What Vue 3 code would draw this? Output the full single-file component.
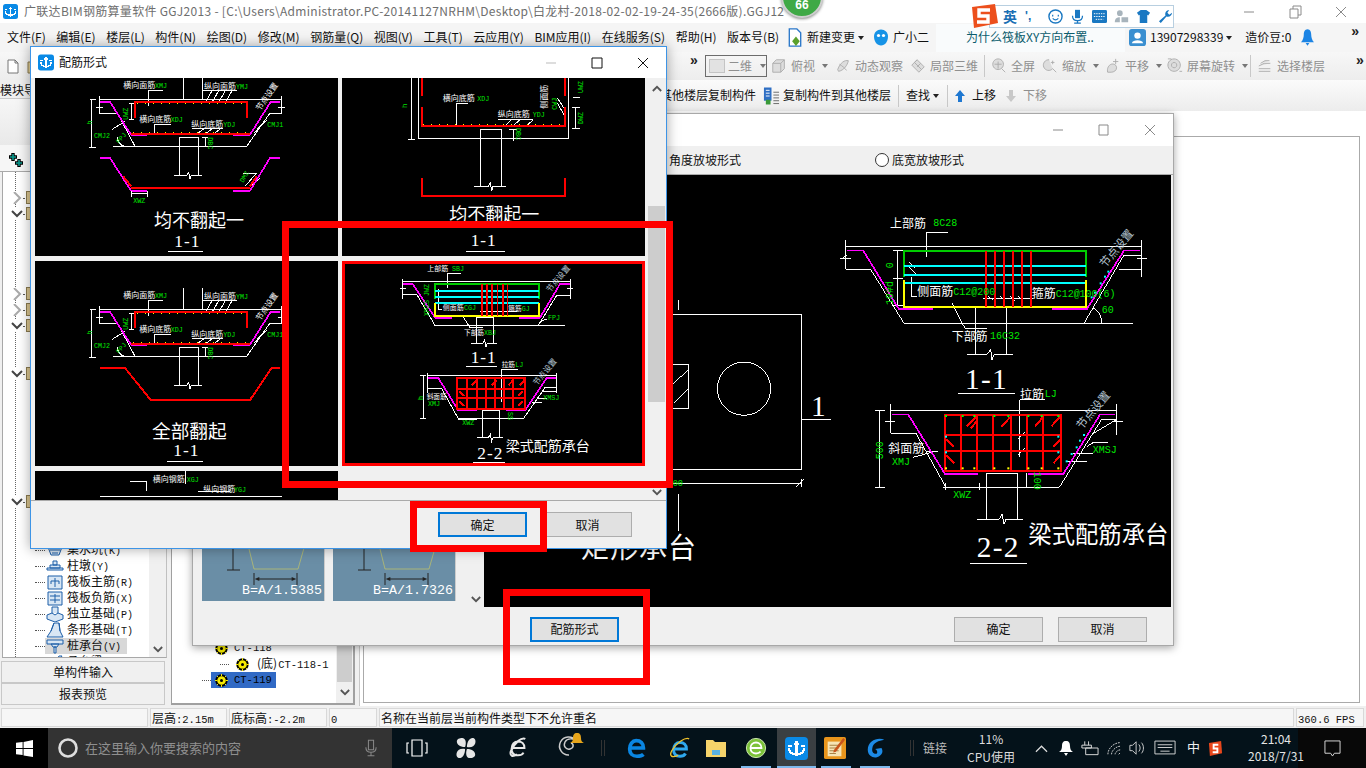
<script setup>
const menus = ["文件(F)", "编辑(E)", "楼层(L)", "构件(N)", "绘图(D)", "修改(M)", "钢筋量(Q)", "视图(V)", "工具(T)", "云应用(Y)", "BIM应用(I)", "在线服务(S)", "帮助(H)", "版本号(B)"];

// toolbar under the menu, greyed out: width is the space each button takes
const viewTools = [
  { text: "俯视", w: 64, caret: true, d: "M2 6l4-4h9v10l-4 4H2zM2 6h9v10M11 6l4-4" },
  { text: "动态观察", w: 75, d: "M3 13c3-8 8-11 12-10-1 5-5 11-11 12zM5 7c3 2 6 4 8 7" },
  { text: "局部三维", w: 74, d: "M2 8l6-6 8 8-6 6zM5 5l8 8M8 2l-3 3M12 6l-4 4" },
  { sep: true },
  { text: "全屏", w: 51, d: "M8 1a6 6 0 1 0 .01 0zM8 4v8M4 7h8M12 12l4 4" },
  { text: "缩放", w: 63, caret: true, d: "M8 2a6 6 0 1 0 4 10M12 12l4 4M12 3v4M10 5h4" },
  { text: "平移", w: 62, caret: true, d: "M3 16c-1-4 1-8 4-9 3-1 6 1 6 4s-3 5-6 5zM12 1v6M9 4h6" },
  { text: "屏幕旋转", w: 83, caret: true, d: "M8 1a7 7 0 1 0 .01 0zM8 5a3 3 0 1 0 .01 0zM1 1h4M14 15h3" },
  { sep: true },
  { text: "选择楼层", w: 70, d: "M2 9l6-3h7M2 12h13M2 15h13M4 6l5-3h5" },
];

const navCaret = { 1: "closed", 2: "open", 7: "closed", 8: "closed", 9: "open", 12: "open", 20: "open" };

const navItems = {
  23: { cn: "集水坑", code: "(K)", d: "M2 5h14l-3 8H5zM4 8h10M6 11h6" },
  24: { cn: "柱墩", code: "(Y)", d: "M7 3h4v4H7zM4 7h10v3H4zM1 10h16v2H1z" },
  25: { cn: "筏板主筋", code: "(R)", d: "M2 2h14v13H2zM9 4v9M5 7h8M5 7v3M13 7v3" },
  26: { cn: "筏板负筋", code: "(X)", d: "M2 2h14v13H2zM9 4v9M4 6h10M4 10h10" },
  27: { cn: "独立基础", code: "(P)", d: "M6 1h6v6l5 2v4l-8 3-8-3V9l5-2zM6 7l3 2 3-2" },
  28: { cn: "条形基础", code: "(T)", d: "M8 1h5l1 8 3 6H1l4-6zM8 1L5 9M13 1l1 8" },
  29: { cn: "桩承台", code: "(V)", on: true, d: "M1 2h16v4H1zM5 6h8l-2 3H7zM8 9h2v6H8z" },
  30: { cn: "承台梁", code: "(F)", d: "M4 15L13 2h3L7 15z" },
};

const navRows = Array.from({ length: 31 }, (_, i) => ({
  id: i,
  caret: navCaret[i],
  item: navItems[i],
}));

const slopeCards = [
  { label: "B=A/1.5385" },
  { label: "B=A/1.7326" },
];

const gridX = [382, 412, 438, 465, 492, 518];
const barX = [425, 440, 456, 472, 488, 502];
const bigBarX = [468, 495, 522, 549, 576, 603];
const bigGridX = [303, 352, 400, 452, 500, 550];
const topDots = [258, 308, 343, 403, 445, 505, 545, 595];
const sideDots = [170, 217];
const slopeDots = [[835, 215], [825, 230], [812, 250], [795, 278], [785, 292]];
const xmsDots = [[672, 165], [660, 182], [650, 202], [635, 222], [620, 244]];
// running-app strips along the bottom of the taskbar
const runningApps = [
  { left: 349, w: 30 },
  { left: 385, w: 39 },
  { left: 429, w: 30 },
  { left: 468, w: 30 },
];
</script>

<template>
  <div class="screen">
    <svg class="cad defs" aria-hidden="true">
      <defs>
        <g id="app-logo">
          <rect width="24" height="24" rx="4" fill="#0a8ae6" />
          <path d="M12 4v16M4 11c0 5 3 7 8 7s8-2 8-7M3 9h4M17 9h4M9 7h6" fill="none" stroke="#fff" stroke-width="2.2" />
        </g>
        <g id="gear-mark">
          <circle cx="8" cy="8" r="6.6" fill="#000" />
          <circle cx="8" cy="8" r="4.6" fill="#f5ea00" />
          <path d="M8 1v14M1 8h14M3 3l10 10M13 3L3 13" stroke="#f5ea00" stroke-width="1.5" stroke-dasharray="2 2" />
          <circle cx="8" cy="8" r="1.6" fill="#000" />
        </g>
        <!-- upper section shared by the two left cells -->
        <g id="pile-top">
          <path class="ln" d="M210 65H755M460 0V65M518 0V65M180 65H197M183 65V207M178 207H197M207 55V105M198 88H220M207 105H262L315 205M250 205H650L720 105H755M755 55V105M745 88H765M448 178H505M448 178V293M505 178V293M433 293H470L476 283L480 302L484 293H515M355 38H400M355 38V85M520 38H620M525 75L545 40M545 75L565 40M565 75L585 40M585 75L605 40M373 140H422M373 140V172M485 152H580M505 165L522 152M530 165L547 152M555 165L572 152M305 75V125M298 75H312M298 125H312M245 155L285 130M285 205A30 30 0 0 1 262 178M525 178V207M515 178H535M672 165L705 130M680 155L712 125" />
          <path class="mg" d="M210 72H240L303 170H350M610 170H660L722 72H750" />
          <path class="rd" d="M315 120V72H650V120M303 168H660" />
          <path class="yd" d="M320 76H648M308 163H655" />
          <text class="cn tw" x="280" y="30" font-size="24">横向面筋</text>
          <text class="en tg" x="375" y="30" font-size="20">XMJ</text>
          <text class="cn tw" x="522" y="34" font-size="24">纵向面筋</text>
          <text class="en tg" x="618" y="34" font-size="20">YMJ</text>
          <text class="cn tw" x="328" y="133" font-size="24">横向底筋</text>
          <text class="en tg" x="422" y="133" font-size="20">XDJ</text>
          <text class="cn tw" x="484" y="148" font-size="24">纵向底筋</text>
          <text class="en tg" x="580" y="148" font-size="20">YDJ</text>
          <text class="cn tw" transform="rotate(-55 690 100)" x="690" y="100" font-size="24">节点设置</text>
          <text class="en tg" transform="rotate(-90 294 125)" x="294" y="125" font-size="20">UWZ</text>
          <text class="en tg" transform="rotate(-90 186 140)" x="186" y="140" font-size="22">h</text>
          <text class="en tg" x="192" y="180" font-size="20">CMJ2</text>
          <text class="en tg" x="712" y="148" font-size="20">CMJ1</text>
          <text class="en tg" transform="rotate(-50 267 198)" x="267" y="198" font-size="20">PPJ</text>
          <text class="en tg" transform="rotate(90 534 178)" x="534" y="178" font-size="20">DBC</text>
        </g>
      </defs>
    </svg>

    <header class="titlebar">
      <svg class="title-logo" viewBox="0 0 24 24"><use href="#app-logo" /></svg>
      <span class="title-text">广联达BIM钢筋算量软件 GGJ2013 - [C:\Users\Administrator.PC-20141127NRHM\Desktop\白龙村-2018-02-02-19-24-35(2666版).GGJ12</span>
      <div class="caption">
        <svg class="cap-btn" viewBox="0 0 46 22"><path d="M18 11h10" /></svg>
        <svg class="cap-btn" viewBox="0 0 46 22"><path d="M18 8h8v9h-8zM21 8V5h8v9h-3" /></svg>
        <svg class="cap-btn" viewBox="0 0 46 22"><path d="M18 6l10 10M28 6L18 16" /></svg>
      </div>
    </header>

    <nav class="menubar">
      <div class="menu-items">
        <span v-for="m in menus" :key="m">{{ m }}</span>
      </div>
      <svg class="menu-ico" viewBox="0 0 16 20">
        <path d="M2 1h8l4 4v14H2z" fill="#fff" stroke="#2a77c9" stroke-width="1.4" />
        <path d="M9 9l4 5-4 5-4-5z" fill="#5aa02c" />
      </svg>
      <span class="menu-text">新建变更</span>
      <i class="caret dark menu-caret"></i>
      <svg class="menu-ico bot" viewBox="0 0 16 18">
        <path d="M8 1c4 0 7 3 7 7 0 5-3 9-7 9s-7-4-7-9c0-4 3-7 7-7z" fill="#1793e6" />
        <circle cx="5.5" cy="7" r="1.6" fill="#fff" /><circle cx="10.5" cy="7" r="1.6" fill="#fff" />
      </svg>
      <span class="menu-text">广小二</span>
      <div class="news"><span>为什么筏板XY方向布置..</span></div>
      <svg class="menu-ico user" viewBox="0 0 18 18">
        <rect width="18" height="18" rx="3" fill="#3a8fd0" />
        <circle cx="9" cy="7" r="3.4" fill="#fff" /><path d="M3 15c1-4 11-4 12 0z" fill="#fff" />
      </svg>
      <span class="menu-text">13907298339</span>
      <i class="caret dark user-caret"></i>
      <span class="menu-text">造价豆:0</span>
      <svg class="menu-ico bell" viewBox="0 0 14 20">
        <path d="M7 1c3 0 4 3 4 6s1 6 3 8H0c2-2 3-5 3-8s1-6 4-6zM5 16h4l-2 3z" fill="#1c84e4" />
      </svg>
      <span class="more menu-more">»</span>
    </nav>

    <div class="toolrow">
      <svg class="file-ico" viewBox="0 0 12 15"><path d="M1 1h7l3 3v10H1zM8 1v3h3" fill="#fff" stroke="#777" /></svg>
      <svg class="file-ico open-ico" viewBox="0 0 12 15"><path d="M1 3h4l1 2h5v9H1z" fill="#e0cd94" stroke="#8a7a50" /></svg>
      <div class="tool-view">
        <span class="more">»</span>
        <div class="combo">
          <i class="combo-box"></i><span>二维</span><i class="caret"></i>
        </div>
        <template v-for="(t, i) in viewTools" :key="i">
          <i v-if="t.sep" class="sep"></i>
          <div v-else class="tool" :style="{ width: t.w + 'px' }">
            <svg viewBox="0 0 18 18"><path :d="t.d" /></svg>
            <span>{{ t.text }}</span>
            <i v-if="t.caret" class="caret"></i>
          </div>
        </template>
        <span class="more end">»</span>
      </div>
    </div>

    <div class="main">
      <aside class="leftnav">
        <div class="nav-tab">模块导航栏</div>
        <div class="nav-tools"></div>
        <div class="nav-head">
          <svg viewBox="0 0 18 16"><path d="M6 1v8M2 5h8M12 7v8M8 11h8" stroke="#000" stroke-width="3.4" /><path d="M6 2v6M3 5h6M12 8v6M9 11h6" stroke="#0a9a8e" stroke-width="1.6" /></svg>
        </div>
        <div class="nav-tree">
          <i class="guide"></i>
          <div v-for="row in navRows" :key="row.id" class="nav-row" :class="{ on: row.item && row.item.on }">
            <template v-if="row.caret">
              <svg class="chev" :class="row.caret" viewBox="0 0 12 12">
                <path v-if="row.caret === 'open'" d="M1 3l5 5 5-5" />
                <path v-else d="M3 0l6 6-6 6" />
              </svg>
              <i class="dots short"></i>
              <i class="folder"></i>
            </template>
            <template v-if="row.item">
              <i class="dots leaf"></i>
              <span class="leaf-body">
                <svg viewBox="0 0 18 16"><path :d="row.item.d" /></svg>
                <span>{{ row.item.cn }}<em>{{ row.item.code }}</em></span>
              </span>
            </template>
          </div>
          <div class="nav-scroll">
            <svg viewBox="0 0 12 8"><path d="M1 1l5 5 5-5" /></svg>
          </div>
        </div>
        <button class="nav-btn">单构件输入</button>
        <button class="nav-btn">报表预览</button>
      </aside>

      <div class="content">
        <div class="toolrow3">
          <span>其他楼层复制构件</span>
          <svg class="t3-ico" viewBox="0 0 18 20">
            <path d="M1 1h8v14H1z" fill="#2f6fc4" /><path d="M3 4h4M3 7h4M3 10h4" stroke="#fff" />
            <path d="M11 6h6M11 9h6M11 12h6M11 15h6M11 18h6" stroke="#666" /><path d="M3 14h5v5H3z" fill="#3a9a3a" />
          </svg>
          <span>复制构件到其他楼层</span>
          <i class="sep"></i>
          <span>查找</span>
          <i class="caret dark"></i>
          <i class="sep"></i>
          <svg class="t3-arrow" viewBox="0 0 10 12"><path d="M5 0l5 6H7v6H3V6H0z" fill="#1f78d1" /></svg>
          <span>上移</span>
          <svg class="t3-arrow down" viewBox="0 0 10 12"><path d="M5 12l5-6H7V0H3v6H0z" fill="#c8c8c8" /></svg>
          <span class="off">下移</span>
        </div>
        <div class="panes">
          <div class="midtree">
            <div class="mid-list">
              <div class="mid-row">
                <svg class="mid-chev" viewBox="0 0 12 8"><path d="M1 1l5 5 5-5" /></svg>
                <svg class="gear" viewBox="0 0 16 16"><use href="#gear-mark" /></svg>
                <span class="code">CT-118</span>
              </div>
              <div class="mid-row sub">
                <i class="dots mid-dots"></i>
                <svg class="gear" viewBox="0 0 16 16"><use href="#gear-mark" /></svg>
                <span class="code"><b>(底)</b>CT-118-1</span>
              </div>
              <div class="mid-row last">
                <i class="dots mid-dots"></i>
                <span class="mid-sel">
                  <svg class="gear" viewBox="0 0 16 16"><use href="#gear-mark" /></svg>
                  <span class="code">CT-119</span>
                </span>
              </div>
            </div>
            <div class="mid-scroll">
              <i></i>
              <svg viewBox="0 0 12 8"><path d="M1 1l5 5 5-5" /></svg>
            </div>
          </div>
          <div class="canvas"><div class="canvas-box"></div></div>
        </div>
      </div>
    </div>

    <footer class="statusbar">
      <span class="cell s1"></span>
      <span class="cell s2">层高<em>:2.15m</em></span>
      <span class="cell s3">底标高<em>:-2.2m</em></span>
      <span class="cell s4"><em>0</em></span>
      <span class="cell s5">名称在当前层当前构件类型下不允许重名</span>
      <span class="cell s6"><em>360.6 FPS</em></span>
    </footer>

    <div class="taskbar">
      <div class="start">
        <svg viewBox="0 0 18 18"><path d="M0 3l7-1v6.500H0zM8 2l10-2v8.500H8zM0 9.500h7V16l-7-1zM8 9.500h10V18L8 16.500z" fill="#fff" /></svg>
      </div>
      <div class="search">
        <svg class="ring" viewBox="0 0 22 22"><circle cx="11" cy="11" r="8.500" fill="none" stroke="#ddd" stroke-width="2.600" /></svg>
        <span>在这里输入你要搜索的内容</span>
        <svg class="mic" viewBox="0 0 14 20"><path d="M4 1h6v11H4zM1 9c0 4 2 6 6 6s6-2 6-6M7 15v4M3 19h8" fill="none" stroke="#888" stroke-width="1.200" /></svg>
      </div>
      <div class="tasks">
        <svg class="tk t-view" viewBox="0 0 22 18"><path d="M6 1h10v16H6zM3 4H1v10h2M19 4h2v10h-2" fill="none" stroke="#fff" stroke-width="1.200" /></svg>
        <svg class="tk t-fan" viewBox="0 0 22 24"><path d="M10 11C4 11 1 8 1 5s3-4 6-4 5 4 3 10zM12 11c0-6 3-10 6-10s4 3 3 6-4 5-9 4zM12 13c6 0 9 3 9 6s-3 4-6 4-5-4-3-10zM10 13c0 6-3 10-6 10s-4-3-3-6 4-5 9-4z" fill="#e6e6e6" /></svg>
        <svg class="tk t-ie" viewBox="0 0 22 24"><path d="M4 12h14c0-5-3-7-7-7s-7 3-7 8 3 7 7 7c3 0 5-1 6-3M19 2c-4-2-12 4-16 14-1 5 2 6 7 3" fill="none" stroke="#e8e8e8" stroke-width="2.200" /></svg>
        <svg class="tk t-swirl" viewBox="0 0 28 26">
          <path d="M12 23a9 9 0 1 1 7-14c-2-3-9-3-11 1s1 8 5 7 4-5 1-6" fill="none" stroke="#ccc" stroke-width="1.500" />
          <path d="M20 1c3 0 4 2 4 5s1 4 3 5H13c2-1 3-2 3-5s1-5 4-5z" fill="#e6a51c" />
        </svg>
        <i class="task-sep"></i>
        <svg class="tk t-edge" viewBox="0 0 22 24"><path d="M3 12h15c0-5-3-8-8-8C6 4 3 8 3 13s3 8 8 8c3 0 6-1 7-2" fill="none" stroke="#0a86e2" stroke-width="4" /></svg>
        <svg class="tk t-edge2" viewBox="0 0 24 24">
          <path d="M6 13h13c0-5-3-7-7-7s-7 3-7 8 3 7 7 7c3 0 5-1 6-3" fill="none" stroke="#2fa8ee" stroke-width="3.200" />
          <path d="M22 2C18 0 8 6 3 15c-3 6 0 8 7 5" fill="none" stroke="#f0c22c" stroke-width="1.500" />
        </svg>
        <svg class="tk t-folder" viewBox="0 0 22 20"><path d="M1 2h7l2 2h11v15H1z" fill="#f6d36a" /><path d="M7 12h8v5H7z" fill="#5ab0e0" /></svg>
        <svg class="tk t-green" viewBox="0 0 24 24">
          <circle cx="12" cy="12" r="10.500" fill="#7cc23a" stroke="#d6f0b8" />
          <path d="M6 12h12c0-4-3-6-6-6s-6 2-6 6 3 6 6 6c2 0 4-1 5-2" fill="none" stroke="#fff" stroke-width="2" />
        </svg>
        <div class="tk-active"><svg viewBox="0 0 24 24"><use href="#app-logo" /></svg></div>
        <svg class="tk t-note" viewBox="0 0 24 24">
          <rect width="24" height="24" rx="2" fill="#e8951c" /><path d="M4 5h15v16H4z" fill="#f6e4b4" />
          <path d="M6 9h10M6 12h10M6 15h10M6 18h7" stroke="#a07a3a" /><path d="M21 1l2 2-10 13-3 1 1-3z" fill="#c8541a" />
        </svg>
        <svg class="tk t-g" viewBox="0 0 24 24"><path d="M21 3c-6-3-18 0-18 11 0 7 6 9 10 8 4-1 8-5 5-10l-7 1c2 1 3 3 2 5-3 1-6-1-5-6 1-6 7-8 13-9z" fill="#1c8ae6" /></svg>
        <i v-for="a in runningApps" :key="a.left" class="run-line" :style="{ left: a.left + 'px', width: a.w + 'px' }"></i>
        <i class="task-sep two"></i>
        <span class="tray-link">链接</span>
        <div class="cpu"><span>11%</span><span>CPU使用</span></div>
      </div>
      <div class="tray">
        <svg class="tr t-up" viewBox="0 0 14 8"><path d="M1 7l6-6 6 6" /></svg>
        <svg class="tr t-bell" viewBox="0 0 14 16"><path d="M7 1c3 0 4 2 4 5s1 5 3 6H0c2-1 3-3 3-6s1-5 4-5zM5 13h4l-2 3z" fill="#fff" stroke="none" /></svg>
        <svg class="tr t-batt" viewBox="0 0 20 16"><path d="M5 1v4M9 1v4M2 5h10v3H2zM6 8v7H19V8z" /></svg>
        <svg class="tr t-wifi" viewBox="0 0 20 16"><path d="M1 15C1 8 8 2 15 2M5 15c0-4 5-9 10-9M9 15c0-2 3-5 6-5M13 15l2-2" stroke-dasharray="2 1" /></svg>
        <svg class="tr t-vol" viewBox="0 0 18 16"><path d="M1 5h3l4-4v14l-4-4H1zM11 4c2 2 2 6 0 8M14 2c3 3 3 9 0 12" /></svg>
        <svg class="tr t-kbd" viewBox="0 0 24 16"><path d="M1 1h22v14H1zM4 5h16M4 8h16M7 12h10" /></svg>
        <span class="tray-zh">中</span>
        <svg class="tr t-s" viewBox="0 0 16 18"><path d="M1 3l13-2 1 13-13 3z" fill="#e8471c" stroke="none" /><path d="M11 5H6v4h4v4H5" stroke="#fff" stroke-width="2" /></svg>
        <div class="clock"><span>21:04</span><span>2018/7/31</span></div>
        <svg class="tr t-note-c" viewBox="0 0 18 18"><path d="M1 1h16v13H11l-2 3-2-3H1z" /></svg>
      </div>
    </div>

    <!-- floating overlays -->
    <div class="badge"><span>66</span></div>
    <div class="sogou">
      <svg class="sg-s" viewBox="0 0 28 24"><path d="M2 3l23-3 3 19-24 5z" fill="#ec4f1c" /><path d="M20 6H9v6h9v6H7" fill="none" stroke="#fff" stroke-width="3.400" /></svg>
      <div class="sg-bar">
        <span class="sg-en">英</span>
        <span class="sg-dot">',</span>
        <svg viewBox="0 0 16 16"><circle cx="8" cy="8" r="7" fill="none" stroke="#1a78c2" stroke-width="1.500" /><path d="M5 6v2M11 6v2M5 10c2 2 4 2 6 0" fill="none" stroke="#1a78c2" stroke-width="1.300" /></svg>
        <svg viewBox="0 0 16 18"><path d="M5 1h6v10H5z" fill="#1a78c2" /><path d="M2 8c0 4 2 6 6 6s6-2 6-6M8 14v3M4 17h8" fill="none" stroke="#1a78c2" stroke-width="1.500" /></svg>
        <svg viewBox="0 0 16 14"><rect width="16" height="14" rx="1.500" fill="#1a78c2" /><path d="M2 4h12M2 7h12M4 10h8" stroke="#fff" stroke-dasharray="1.500 1" /></svg>
        <svg viewBox="0 0 18 16"><circle cx="7" cy="4" r="3.400" fill="#a8b4bc" /><path d="M1 15c0-5 3-6 6-6v6zM9 9h8v6H9z" fill="#a8b4bc" /></svg>
        <svg viewBox="0 0 16 14"><path d="M1 3l4-3h6l4 3-2 3-1-1v9H4V5L3 6z" fill="#1a78c2" /></svg>
        <svg viewBox="0 0 16 16"><path d="M15 4c0 3-3 5-6 4L3 15l-2-2 7-6c-1-3 1-6 4-6l-2 3 2 2z" fill="#1a78c2" /></svg>
      </div>
    </div>

    <!-- window behind -->
    <section class="win back">
      <div class="win-title">
        <svg class="cap-btn" viewBox="0 0 46 22"><path d="M18 11h10" /></svg>
        <svg class="cap-btn" viewBox="0 0 46 22"><path d="M18 6h9v10h-9z" /></svg>
        <svg class="cap-btn" viewBox="0 0 46 22"><path d="M18 6l10 10M28 6L18 16" /></svg>
      </div>
      <div class="radios">
        <span class="radio-a">角度放坡形式</span>
        <i class="radio"></i>
        <span>底宽放坡形式</span>
      </div>
      <div class="back-body">
        <div class="slope-list">
          <div class="cards">
            <div v-for="c in slopeCards" :key="c.label" class="card">
              <svg viewBox="0 0 366 180">
                <path d="M135 0L156 84H288L312 0" fill="none" stroke="#c8c864" stroke-width="2" />
                <path d="M93 0V87M75 87H114M156 96V132M285 96V132M165 114H276" fill="none" stroke="#222" stroke-width="3" />
                <path d="M158 114l14-6v12zM283 114l-14-6v12z" fill="#222" />
                <text class="card-t" x="120" y="159">{{ c.label }}</text>
              </svg>
            </div>
          </div>
          <div class="slope-scroll"><svg viewBox="0 0 12 8"><path d="M1 1l5 5 5-5" /></svg></div>
        </div>
        <svg class="cad big" viewBox="484 175 687 432" width="687" height="432">
          <g transform="translate(480 300) scale(.33333)">
            <path class="ln" d="M12 43H965V508H12M712 266a80 80 0 1 0 160 0a80 80 0 1 0 -160 0M12 193H625V326H12M580 250L625 210M580 310L625 265M965 358H1052M12 550H965M950 560L970 538M965 538V562M595 0V30M595 582V692" />
            <text class="en tg" x="578" y="558" font-size="26">00</text>
            <text class="se tw" x="993" y="348" font-size="88">1</text>
          </g>
          <text class="cn tw" x="581" y="558" font-size="28" letter-spacing="1">矩形承台</text>

          <!-- section 1-1 -->
          <g transform="translate(830 200) scale(.33333)">
            <path class="ln" d="M47 139H935M47 120V208M935 120V232M47 208H122L222 370H908M762 370L880 168H935M868 208H935M30 175H62M38 175L50 165M920 175H952M290 97H355M290 97V172M190 152H220M190 318H220M203 152V318M190 236H220M437 325V465M530 325V465M412 465H470L482 448L486 480L492 465H548M365 308L405 385H472M815 370A52 52 0 0 0 790 324M245 290V232M245 290H262M460 295H610M235 185L255 205M475 288L490 302M510 288L525 302M540 288L555 302M565 288L580 302" />
            <path class="ln" d="M235 200L258 222" />
            <path class="mg" d="M52 152H100L207 328H310M665 328H770L882 152H930" />
            <path class="gl" d="M768 232V152H222V232" />
            <path class="cy" d="M222 197H768M222 224H768M222 248H768" />
            <path class="ye" d="M222 240V320H768V240" />
            <path v-for="x in bigBarX" :key="x" class="rd thin" :d="`M${x} 152V320`" />
            <rect v-for="(p, i) in slopeDots" :key="i" class="cy-dot" :x="p[0] - 3" :y="p[1] - 3" width="6" height="6" />
            <text class="cn tw" x="180" y="84" font-size="36">上部筋</text>
            <text class="en tg" x="310" y="79" font-size="30">8C28</text>
            <text class="cn tw" x="262" y="288" font-size="36">侧面筋</text>
            <text class="en tg" x="370" y="284" font-size="30">C12@200</text>
            <text class="cn tw" x="605" y="295" font-size="36">箍筋</text>
            <text class="en tg" x="677" y="290" font-size="30">C12@100(6)</text>
            <text class="en tg" x="815" y="338" font-size="30">60</text>
            <text class="cn tw" x="365" y="422" font-size="36">下部筋</text>
            <text class="en tg" x="480" y="418" font-size="30">16C32</text>
            <text class="en tg" transform="rotate(-90 188 205)" x="188" y="205" font-size="30">0</text>
            <text class="en tg" transform="rotate(-90 188 315)" x="188" y="315" font-size="30">10#d</text>
            <text class="cn ts" transform="rotate(-50 825 205)" x="825" y="205" font-size="34">节点设置</text>
            <text class="se tw" x="405" y="567" font-size="88" letter-spacing="4">1-1</text>
            <path class="ln" d="M385 582H555" />
          </g>

          <!-- section 2-2 -->
          <g transform="translate(860 380) scale(.33333)">
            <path class="ln" d="M92 92H770M92 72V160M770 72V165M92 160H168L258 322H598L725 118H770M45 92H75M45 322H75M58 92V322M74 125H105M755 125H790M480 60H555M480 60V232M380 280V418M472 280V418H490M352 418H418L426 402L432 432L438 418H472M380 280H472M248 322H362M258 310V330M358 310V330M500 280V322M200 215H235M160 232L220 215M620 244H680M640 222H700M695 188H745M680 200L700 188M700 160L770 118M472 178L495 155M472 226L495 203" />
            <path class="mg" d="M96 104H145L255 282H355M503 282H610L720 104H765" />
            <path class="rd" d="M255 272V104H603V272ZM255 165H603M255 213H603" />
            <path v-for="x in bigGridX" :key="x" class="rd" :d="`M${x} 104V272`" />
            <path class="rd" d="M320 138L348 110M332 145L352 122M425 140L450 112M525 140L548 112M575 138L600 110M258 178L282 200M258 225L282 250M603 178L580 200M603 225L580 250" />
            <rect v-for="x in topDots" :key="'g' + x" class="gl-dot" :x="x - 3" y="105" width="6" height="6" />
            <rect v-for="x in topDots" :key="'y' + x" class="ye-dot" :x="x - 3" y="262" width="6" height="6" />
            <template v-for="y in sideDots" :key="y">
              <rect class="cy-dot" x="255" :y="y - 3" width="6" height="6" />
              <rect class="cy-dot" x="592" :y="y - 3" width="6" height="6" />
            </template>
            <rect v-for="(p, i) in xmsDots" :key="i" class="cy-dot" :x="p[0] - 3" :y="p[1] - 3" width="6" height="6" />
            <text class="cn tw" x="480" y="56" font-size="36">拉筋</text>
            <text class="en tg" x="554" y="52" font-size="30">LJ</text>
            <text class="cn tw" x="85" y="220" font-size="36">斜面筋</text>
            <text class="en tg" x="96" y="255" font-size="30">XMJ</text>
            <text class="en tg" x="698" y="220" font-size="30">XMSJ</text>
            <text class="en tg" x="280" y="354" font-size="30">XWZ</text>
            <text class="en tg" transform="rotate(-90 70 238)" x="70" y="238" font-size="30">500</text>
            <text class="en tg" transform="rotate(90 522 275)" x="522" y="275" font-size="30">100</text>
            <text class="cn ts" transform="rotate(-50 665 150)" x="665" y="150" font-size="34">节点设置</text>
            <text class="se tw" x="350" y="530" font-size="88" letter-spacing="4">2-2</text>
            <path class="ln" d="M330 552H500" />
            <text class="cn tw" x="505" y="490" font-size="70">梁式配筋承台</text>
          </g>
        </svg>
      </div>
      <div class="back-foot">
        <button class="btn primary first">配筋形式</button>
        <button class="btn">确定</button>
        <button class="btn">取消</button>
      </div>
    </section>

    <!-- window in front -->
    <section class="win front">
      <div class="win-title front-title">
        <svg class="front-logo" viewBox="0 0 24 24"><use href="#app-logo" /></svg>
        <span>配筋形式</span>
        <svg class="cap-btn dark" viewBox="0 0 46 22"><path class="min" d="M18 11h10" /></svg>
        <svg class="cap-btn dark" viewBox="0 0 46 22"><path d="M18 6h10v10H18z" /></svg>
        <svg class="cap-btn dark" viewBox="0 0 46 22"><path d="M18 6l10 10M28 6L18 16" /></svg>
      </div>
      <div class="front-body">
        <div class="shapes">
          <div class="shape">
            <svg class="cad" viewBox="15 0 909 534" width="303" height="178">
              <use href="#pile-top" />
              <path class="ln" d="M433 293H470L476 283L480 302L484 293H515M645 325L680 285M660 325L690 300M640 285H680" />
              <path class="mg" d="M210 240H240L303 338H352M610 338H660L720 240H750" />
              <path class="rd" d="M303 330H660M280 295L303 325M660 325L680 295" />
              <path class="ln" d="M303 345H352M303 338V358M352 338V358" />
              <text class="en tg" x="310" y="374" font-size="20">XWZ</text>
              <text class="en tg" transform="rotate(-60 640 315)" x="640" y="315" font-size="20">DMZ</text>
              <text class="cn tw" x="372" y="446" font-size="54">均不翻起一</text>
              <text class="se tw" x="433" y="507" font-size="52" letter-spacing="3">1-1</text>
              <path class="ln" d="M415 520H518" />
            </svg>
          </div>
          <div class="shape">
            <svg class="cad" viewBox="6 0 909 534" width="303" height="178">
              <path class="ln" d="M235 0V180H686V0M215 0V183M205 183H225M421 155H485M421 155V325M485 155V325M403 325H445L451 315L455 338L459 325H497M350 75H384M350 75V148M473 125H578M495 143L515 125M520 143L540 125M560 143L580 125M707 88V150M695 88H720M695 150H720M700 58H720M652 60L675 95M652 75L675 115M520 155V188M508 155H530" />
              <path class="rd" d="M245 0V55M245 88V143H675V88M675 55V0M245 300V355H675V300" />
              <path class="yd" d="M250 138H672" />
              <text class="cn tw" x="308" y="68" font-size="24">横向底筋</text>
              <text class="en tg" x="412" y="68" font-size="20">XDJ</text>
              <text class="cn tw" x="473" y="118" font-size="24">纵向底筋</text>
              <text class="en tg" x="578" y="118" font-size="20">YDJ</text>
              <text class="cn tw" transform="rotate(-90 622 92)" x="622" y="92" font-size="24">侧面筋</text>
              <text class="en tg" transform="rotate(-90 650 95)" x="650" y="95" font-size="20">CWJ</text>
              <text class="en tg" transform="rotate(-90 730 45)" x="730" y="45" font-size="20">UWZ</text>
              <text class="en tg" transform="rotate(-90 730 138)" x="730" y="138" font-size="20">DWZ</text>
              <text class="en tg" transform="rotate(-90 200 90)" x="200" y="90" font-size="22">h</text>
              <text class="en tg" transform="rotate(90 527 150)" x="527" y="150" font-size="20">DBC</text>
              <text class="cn tw" x="328" y="428" font-size="54">均不翻起一</text>
              <text class="se tw" x="392" y="505" font-size="52" letter-spacing="3">1-1</text>
              <path class="ln" d="M378 520H495" />
            </svg>
          </div>
          <div class="shape">
            <svg class="cad" viewBox="15 0 909 615" width="303" height="205">
              <use href="#pile-top" y="81" />
              <path class="rd" d="M210 321H285L362 417H660L725 321H750" />
              <text class="cn tw" x="366" y="531" font-size="56">全部翻起</text>
              <text class="se tw" x="430" y="585" font-size="52" letter-spacing="3">1-1</text>
              <path class="ln" d="M412 600H518" />
            </svg>
          </div>
          <div class="shape picked">
            <svg class="cad" viewBox="18 24 885 597" width="297" height="199">
              <path class="ln" d="M188 76H692M188 68V130M692 68V130M188 115H230L285 208H675M595 208L650 118H692M180 98H198M682 98H700M322 52H362M322 52V95M408 183V262M460 183V262M393 262H428L434 252L438 272L442 262H470M408 183H460M368 180L390 215H430M595 208A32 32 0 0 1 620 190M295 100V160M295 160H305M420 165H530M378 330H472M262 358H650M262 350V410M650 350V410M240 358H258M240 488H258M250 358V488M262 398H305L355 488H550L615 395H650M485 340H535M485 340V437M427 463V545M478 463V545M412 545H445L451 535L455 555L459 545H490M427 463H478M355 490H412M400 620H495M607 405H650M590 428H620M575 440H605" />
              <path class="mg" d="M190 84H218L285 185H335M538 185H600L660 84H690M265 366H295L355 463H412M497 463H555L620 366H648" />
              <path class="gl" d="M285 130V84H597V130" />
              <path class="cy" d="M285 106H597M285 124H597M285 140H597" />
              <path class="ye" d="M285 140V180H597V140" />
              <path v-for="x in barX" :key="x" class="rd thin" :d="`M${x} 84V180`" />
              <path class="rd" d="M352 366H555V460H352ZM352 398H555M352 425H555" />
              <path v-for="x in gridX" :key="x" class="rd" :d="`M${x} 366V460`" />
              <path class="rd" d="M395 388L410 372M455 388L470 372M505 388L520 372M540 388L553 372M358 405L372 420M358 435L372 450M548 405L535 420M548 435L535 450" />
              <text class="cn tw" x="262" y="45" font-size="21">上部筋</text>
              <text class="en tg" x="336" y="45" font-size="20">SBJ</text>
              <text class="cn tw" x="308" y="162" font-size="21">侧面筋</text>
              <text class="en tg" x="372" y="162" font-size="20">CGJ</text>
              <text class="cn tw" x="505" y="165" font-size="20">箍筋</text>
              <text class="en tg" x="545" y="165" font-size="20">GJ</text>
              <text class="cn tw" x="372" y="237" font-size="20">下部筋</text>
              <text class="en tg" x="432" y="237" font-size="20">XBJ</text>
              <text class="en tg" x="624" y="192" font-size="20">FPJ</text>
              <text class="en tg" transform="rotate(-90 268 180)" x="268" y="180" font-size="20">XMZS JWZ</text>
              <text class="cn ts" transform="rotate(-50 630 110)" x="630" y="110" font-size="24">节点设置</text>
              <text class="se tw" x="392" y="320" font-size="52" letter-spacing="3">1-1</text>
              <text class="cn tw" x="485" y="332" font-size="20">拉筋</text>
              <text class="en tg" x="526" y="332" font-size="20">LJ</text>
              <text class="cn ts" transform="rotate(-50 590 390)" x="590" y="390" font-size="24">节点设置</text>
              <text class="cn tw" x="260" y="430" font-size="20">斜面筋</text>
              <text class="en tg" x="264" y="450" font-size="20">XMJ</text>
              <text class="en tg" x="610" y="432" font-size="20">XMSJ</text>
              <text class="en tg" x="367" y="506" font-size="20">XWZ</text>
              <text class="en tg" transform="rotate(-90 248 432)" x="248" y="432" font-size="20">h</text>
              <text class="en tg" transform="rotate(90 504 468)" x="504" y="468" font-size="20">SS</text>
              <text class="se tw" x="412" y="608" font-size="52" letter-spacing="3">2-2</text>
              <text class="cn tw" x="497" y="585" font-size="42">梁式配筋承台</text>
            </svg>
          </div>
          <div class="shape">
            <svg class="cad" viewBox="15 0 909 87" width="303" height="29">
              <path class="ln" d="M465 0V38M300 32H350M350 32V60M505 60H600M210 75H755" />
              <text class="cn tw" x="368" y="32" font-size="24">横向钢筋</text>
              <text class="en tg" x="470" y="32" font-size="20">XGJ</text>
              <text class="cn tw" x="520" y="62" font-size="24">纵向钢筋</text>
              <text class="en tg" x="612" y="62" font-size="20">YGJ</text>
            </svg>
          </div>
          <div class="shape blank"></div>
        </div>
        <div class="front-scroll">
          <svg class="up" viewBox="0 0 12 8"><path d="M1 7l5-5 5 5" /></svg>
          <i></i>
          <svg class="dn" viewBox="0 0 12 8"><path d="M1 1l5 5 5-5" /></svg>
        </div>
      </div>
      <div class="win-foot front-foot">
        <button class="btn primary">确定</button>
        <button class="btn">取消</button>
      </div>
    </section>

    <!-- red marks someone drew over the capture -->
    <i class="mark m1"></i>
    <i class="mark m2"></i>
    <i class="mark m3"></i>
  </div>
</template>

<style scoped>
.screen {
  position: relative;
  width: 1366px;
  height: 768px;
  overflow: hidden;
  display: flex;
  flex-direction: column;
  background: #f0f0f0;
  color: #111;
  font: 12px/1.2 "Noto Sans CJK SC", "Liberation Sans", sans-serif;
}

.defs {
  position: absolute;
  width: 0;
  height: 0;
}

em {
  font-style: normal;
  font-family: "Liberation Mono", monospace;
  font-size: 10px;
}

/* title bar */
.titlebar {
  height: 23px;
  flex: none;
  display: flex;
  align-items: center;
  background: #fff;
  padding-left: 3px;
}
.title-logo {
  width: 15px;
  height: 17px;
  flex: none;
}
.title-text {
  width: 770px;
  flex: none;
  margin-left: 6px;
  overflow: hidden;
  white-space: nowrap;
  letter-spacing: .3px;
  color: #6e6e6e;
}
.caption {
  margin-left: auto;
  display: flex;
  padding-right: 2px;
}
.cap-btn {
  width: 46px;
  height: 22px;
  fill: none;
  stroke: #8a8a8a;
}
.cap-btn.dark {
  stroke: #111;
}
.cap-btn .min {
  stroke: #bbb;
}

/* menu */
.menubar {
  height: 29px;
  flex: none;
  display: flex;
  align-items: center;
  background: #f5f5f5;
}
.menu-items {
  width: 787px;
  flex: none;
  display: flex;
  gap: 10.6px;
  padding-left: 7px;
  box-sizing: border-box;
  white-space: nowrap;
}
.menu-ico {
  flex: none;
  width: 16px;
  height: 19px;
}
.menu-text {
  margin-left: 4px;
  white-space: nowrap;
}
.menu-caret {
  margin-left: 6px;
}
.bot {
  margin-left: 9px;
}
.news {
  width: 189px;
  height: 28px;
  margin-left: 7px;
  flex: none;
  display: flex;
  align-items: center;
  padding-left: 30px;
  box-sizing: border-box;
  background: #f9fbfc;
  color: #0b5c6c;
  white-space: nowrap;
}
.user {
  width: 17px;
  height: 17px;
  margin-left: 4px;
}
.user-caret {
  margin: 0 9px 0 8px;
}
.bell {
  width: 13px;
  margin-left: 10px;
}
.more {
  font: bold 14px/1 "Liberation Sans", sans-serif;
  color: #222;
}
.menu-more {
  margin: -14px 0 0 37px;
}

/* toolbar row */
.toolrow {
  height: 28px;
  flex: none;
  display: flex;
  align-items: center;
  background: linear-gradient(#f7f7f7, #ededed);
}
.file-ico {
  width: 12px;
  height: 15px;
  flex: none;
  margin-left: 7px;
}
.open-ico {
  margin-left: 8px;
}
.tool-view {
  margin-left: 651px;
  flex: none;
  display: flex;
  align-items: center;
  color: #8f8f8f;
}
.tool-view > .more {
  width: 15px;
  margin-top: -12px;
}
.tool-view > .more.end {
  margin: -12px 0 0 29px;
  width: 8px;
}
.combo {
  width: 62px;
  height: 22px;
  box-sizing: border-box;
  border: 1px solid #6c6c6c;
  display: flex;
  align-items: center;
  gap: 3px;
  padding-left: 3px;
  margin-right: 4px;
}
.combo-box {
  width: 14px;
  height: 12px;
  background: #e2e2e2;
  border: 1px solid #c4c4c4;
}
.combo span {
  width: 26px;
}
.tool {
  display: flex;
  align-items: center;
  flex: none;
  gap: 4px;
}
.tool svg {
  width: 16px;
  height: 16px;
  flex: none;
  fill: #ddd;
  stroke: #aaa;
}
.tool span {
  white-space: nowrap;
}
.caret {
  display: inline-block;
  width: 0;
  height: 0;
  flex: none;
  border: 3px solid transparent;
  border-top: 4px solid #777;
  border-bottom: 0;
  margin-left: 3px;
}
.caret.dark {
  border-top-color: #222;
}
.sep {
  flex: none;
  width: 1px;
  height: 22px;
  background: #c8c8c8;
  margin: 0 6px 0 0;
}

.main {
  flex: 1;
  min-height: 0;
  display: flex;
}

/* module tree on the left */
.leftnav {
  width: 167px;
  flex: none;
  display: flex;
  flex-direction: column;
}
.nav-tab {
  height: 18px;
  line-height: 20px;
  font-size: 12px;
  white-space: nowrap;
  overflow: hidden;
}
.nav-tools {
  height: 47px;
  border-top: 1px solid #c9c9c9;
  box-sizing: border-box;
  background: linear-gradient(#f6f6f6, #e9e9e9);
}
.nav-head {
  height: 27px;
  box-sizing: border-box;
  background: #f6f6f6;
  border-bottom: 1px solid #aaa;
  padding: 7px 0 0 7px;
}
.nav-head svg {
  width: 18px;
  height: 16px;
  display: block;
}
.nav-tree {
  position: relative;
  height: 486px;
  flex: none;
  margin-left: 2px;
  padding-top: 2px;
  box-sizing: border-box;
  overflow: hidden;
  background: #fff;
  border-left: 1px solid #a8a8a8;
  border-right: 1px solid #c0c0c0;
  border-bottom: 1px solid #a8a8a8;
}
.guide {
  position: absolute;
  left: 12px;
  top: 0;
  bottom: 0;
  border-left: 1px dotted #666;
}
.nav-row {
  position: relative;
  height: 16px;
  display: flex;
  align-items: center;
  white-space: nowrap;
}
.chev {
  position: absolute;
  left: 8px;
  width: 12px;
  height: 12px;
  background: #fff;
  fill: none;
  stroke-width: 2;
}
.chev.open {
  stroke: #444;
}
.chev.closed {
  stroke: #aaa;
}
.dots {
  flex: none;
  border-top: 1px dotted #555;
  display: block;
}
.dots.short {
  position: absolute;
  left: 20px;
  width: 4px;
}
.folder {
  position: absolute;
  left: 23px;
  top: 1px;
  width: 15px;
  height: 13px;
  background: #d9c48f;
  border: 1px solid #8a7a50;
  box-sizing: border-box;
}
.dots.leaf {
  margin-left: 32px;
  width: 10px;
}
.leaf-body {
  display: flex;
  align-items: center;
  gap: 3px;
  width: 82px;
  height: 16px;
  padding-left: 1px;
  box-sizing: border-box;
  font-size: 12px;
}
.leaf-body em {
  font-size: 10px;
}
.nav-row.on .leaf-body {
  background: #d8d8d8;
}
.leaf-body svg {
  width: 18px;
  height: 16px;
  flex: none;
  fill: #d8e6f4;
  stroke: #1d5ea8;
}
.nav-scroll {
  position: absolute;
  right: 0;
  top: 0;
  bottom: 0;
  width: 17px;
  background: #f0f0f0;
  display: flex;
  align-items: flex-end;
  justify-content: center;
  padding-bottom: 4px;
  box-sizing: border-box;
}
.nav-scroll svg,
.slope-scroll svg,
.mid-scroll svg,
.front-scroll svg {
  width: 10px;
  height: 7px;
  fill: none;
  stroke: #555;
  stroke-width: 2.2;
}
.nav-btn {
  height: 22px;
  margin: 0 0 0 1px;
  width: 164px;
  flex: none;
  border: 1px solid #c8c8c8;
  background: #f0f0f0;
  font: 12px/1 "Noto Sans CJK SC", sans-serif;
  color: #111;
  padding: 0;
}
.nav-btn:first-of-type {
  margin-top: 3px;
}

.content {
  flex: 1;
  min-width: 0;
  display: flex;
  flex-direction: column;
}
.toolrow3 {
  height: 31px;
  flex: none;
  display: flex;
  align-items: center;
  padding-left: 493px;
  white-space: nowrap;
  background: linear-gradient(#fbfbfb, #ececec);
}
.t3-ico {
  width: 17px;
  height: 20px;
  margin: 0 3px 0 7px;
}
.t3-arrow {
  width: 10px;
  height: 12px;
  margin-right: 7px;
}
.t3-arrow.down {
  margin-left: 10px;
}
.toolrow3 .off {
  color: #8f8f8f;
}
.toolrow3 .sep {
  margin: 0 7px;
}
.toolrow3 .caret {
  margin: 0 1px 0 3px;
}
.panes {
  flex: 1;
  min-height: 0;
  display: flex;
  gap: 4px;
  padding-left: 4px;
}
.midtree {
  width: 184px;
  flex: none;
  margin-bottom: 1px;
  display: flex;
  background: #fff;
  border: 1px solid #a0a0a0;
  box-sizing: border-box;
  border-width: 0 2px 2px 1px;
}
.mid-list {
  flex: 1;
  display: flex;
  flex-direction: column;
  justify-content: flex-end;
  padding-bottom: 15px;
}
.mid-row {
  position: relative;
  height: 16px;
  display: flex;
  align-items: center;
  white-space: nowrap;
  padding-left: 26px;
}
.mid-chev {
  position: absolute;
  left: 25px;
  width: 10px;
  height: 7px;
  top: -1px;
  fill: none;
  stroke: #444;
  stroke-width: 2;
}
.gear {
  width: 15px;
  height: 15px;
  flex: none;
  margin-left: 16px;
}
.code {
  margin-left: 5px;
  font: 10.500px/1 "Liberation Mono", monospace;
}
.code b {
  font: 12px/1 "Noto Sans CJK SC", sans-serif;
  margin: 0 1px 0 2px;
}
.mid-row.sub {
  padding-left: 48px;
}
.mid-row.sub .gear {
  margin-left: 6px;
}
.mid-dots {
  width: 9px;
}
.mid-row.last {
  padding-left: 30px;
}
.mid-sel {
  display: flex;
  align-items: center;
  height: 16px;
  padding: 0 4px 0 1px;
  background: #316ac5;
  color: #000;
}
.mid-sel .gear {
  margin-left: 2px;
}
.mid-scroll {
  width: 17px;
  flex: none;
  display: flex;
  flex-direction: column;
  align-items: center;
  background: #f0f0f0;
}
.mid-scroll i {
  display: block;
  flex: 1;
  width: 15px;
  background: #cdcdcd;
}
.mid-scroll svg {
  margin: 7px 0;
}
.canvas {
  flex: 1;
  background: #fff;
  padding: 25px 6px 3px 3px;
  border-left: 1px solid #c8c8c8;
}
.canvas-box {
  height: 100%;
  box-sizing: border-box;
  border: 1px solid #aaa;
}

/* status bar */
.statusbar {
  height: 22px;
  flex: none;
  display: flex;
  gap: 2px;
  padding: 2px 0 1px 1px;
  box-sizing: border-box;
  background: #f0f0f0;
}
.statusbar .cell {
  box-sizing: border-box;
  border: 1px solid #d8d8d8;
  background: #f6f6f6;
  padding-left: 1px;
  line-height: 17px;
  white-space: nowrap;
}
.statusbar em {
  font-size: 10.500px;
}
.s1 { width: 147px; }
.s2 { width: 77px; }
.s3 { width: 98px; }
.s4 { width: 48px; }
.s5 { width: 915px; }
.s6 { width: 68px; }

/* taskbar */
.taskbar {
  position: relative;
  height: 40px;
  flex: none;
  display: flex;
  color: #ddd;
  background: linear-gradient(90deg, #04121a 95%, #080808 95%);
}
.start {
  width: 48px;
  background: #000;
  display: flex;
  align-items: center;
  justify-content: center;
}
.start svg {
  width: 17px;
  height: 17px;
}
.search {
  width: 344px;
  flex: none;
  display: flex;
  align-items: center;
  background: #333;
  color: #8f8f8f;
  font-size: 13px;
}
.ring {
  width: 22px;
  height: 22px;
  margin: 0 6px 0 9px;
}
.mic {
  width: 12px;
  height: 18px;
  margin-left: auto;
  margin-right: 15px;
}
.tasks {
  position: relative;
  flex: 1;
  display: flex;
  align-items: center;
}
.tk {
  position: absolute;
  top: 9px;
  width: 22px;
  height: 22px;
}
.t-view { left: 14px; }
.t-fan { left: 63px; }
.t-ie { left: 115px; }
.t-swirl { left: 165px; width: 28px; top: 4px; height: 26px; }
.t-edge { left: 234px; }
.t-edge2 { left: 277px; }
.t-folder { left: 313px; }
.t-green { left: 353px; }
.t-note { left: 432px; }
.t-g { left: 473px; }
.task-sep {
  position: absolute;
  left: 209px;
  top: 12px;
  width: 2px;
  height: 16px;
  border-left: 1px solid #333;
  border-right: 1px solid #333;
}
.task-sep.two {
  left: 518px;
}
.run-line {
  position: absolute;
  bottom: 0;
  height: 2px;
  background: #7db8ec;
}
.tk-active {
  position: absolute;
  left: 385px;
  top: 0;
  width: 39px;
  height: 40px;
  background: #3a3f42;
  display: flex;
  align-items: center;
  justify-content: center;
}
.tk-active svg {
  width: 23px;
  height: 23px;
}
.tray-link {
  position: absolute;
  left: 531px;
  color: #bbb;
}
.cpu {
  position: absolute;
  left: 576px;
  width: 46px;
  display: flex;
  flex-direction: column;
  align-items: center;
  gap: 3px;
  white-space: nowrap;
  font-size: 12px;
}
.tray {
  position: absolute;
  right: 0;
  bottom: 0;
  left: 1030px;
  height: 40px;
}
.tr {
  position: absolute;
  top: 12px;
  fill: none;
  stroke: #ddd;
}
.t-up { left: 5px; width: 13px; height: 8px; top: 17px; stroke-width: 1.300; }
.t-bell { left: 29px; width: 14px; height: 16px; }
.t-batt { left: 50px; width: 19px; height: 16px; }
.t-wifi { left: 77px; width: 18px; height: 16px; }
.t-vol { left: 99px; width: 16px; height: 16px; }
.t-kbd { left: 124px; width: 22px; height: 15px; }
.t-s { left: 178px; width: 15px; height: 17px; }
.t-note-c { left: 294px; width: 17px; height: 17px; }
.tray-zh {
  position: absolute;
  left: 157px;
  top: 11px;
  font-size: 13px;
  color: #eee;
}
.clock {
  position: absolute;
  left: 221px;
  top: 4px;
  width: 50px;
  display: flex;
  flex-direction: column;
  align-items: center;
  gap: 3px;
  white-space: nowrap;
  color: #e6e6e6;
}

/* overlays */
.badge {
  position: absolute;
  left: 781px;
  top: -24px;
  width: 42px;
  height: 42px;
  border-radius: 50%;
  border: 2px solid #cfcfcf;
  background: #3fa946;
  box-shadow: 0 1px 3px rgba(0, 0, 0, .45);
  color: #fff;
  font: bold 12px/1 "Liberation Sans", sans-serif;
  display: flex;
  align-items: flex-end;
  justify-content: center;
  padding-bottom: 5px;
  box-sizing: border-box;
}
.sogou {
  position: absolute;
  left: 970px;
  top: 4px;
  display: flex;
  align-items: center;
}
.sg-s {
  width: 28px;
  height: 24px;
  z-index: 1;
}
.sg-bar {
  width: 185px;
  height: 23px;
  margin-left: -9px;
  box-sizing: border-box;
  border: 1px solid #b8cfe0;
  background: #fff;
  display: flex;
  align-items: center;
  gap: 7px;
  padding-left: 13px;
}
.sg-bar svg {
  width: 15px;
  height: 15px;
  flex: none;
}
.sg-en {
  width: 18px;
  font-weight: bold;
  font-size: 14px;
  color: #1a6fb4;
}
.sg-dot {
  width: 19px;
  font: bold 12px/1 "Liberation Sans", sans-serif;
  color: #1a6fb4;
}

/* dialog windows */
.win {
  position: absolute;
  display: flex;
  flex-direction: column;
  box-sizing: border-box;
  background: #f0f0f0;
}
.back {
  left: 192px;
  top: 113px;
  width: 982px;
  height: 533px;
  border: 1px solid #a8a8a8;
  box-shadow: 0 2px 8px rgba(0, 0, 0, .35);
}
.front {
  left: 30px;
  top: 46px;
  width: 637px;
  height: 503px;
  border: 1px solid #3d94e6;
  box-shadow: 0 0 12px rgba(0, 0, 0, .35);
}
.win-title {
  height: 32px;
  flex: none;
  background: #fff;
  display: flex;
  align-items: center;
  justify-content: flex-end;
}
.radios {
  height: 29px;
  flex: none;
  box-sizing: border-box;
  border-bottom: 1px solid #aaa;
  display: flex;
  align-items: center;
  white-space: nowrap;
  padding-left: 476px;
}
.radio-a {
  width: 206px;
}
.radio {
  width: 12px;
  height: 12px;
  margin-right: 3px;
  border: 1px solid #333;
  border-radius: 50%;
  background: #fff;
}
.back-body {
  height: 432px;
  flex: none;
  display: flex;
}
.slope-list {
  width: 291px;
  flex: none;
  display: flex;
  align-items: flex-end;
  background: #f0f0f0;
}
.cards {
  flex: 1;
  display: flex;
  gap: 8px;
  padding: 0 0 6px 9px;
}
.card {
  width: 122px;
  height: 60px;
  background: #6a8ea6;
  border-right: 1px solid #ccc;
}
.card svg {
  display: block;
  width: 122px;
  height: 60px;
}
.card-t {
  font-family: "Liberation Mono", monospace;
  font-size: 40px;
  fill: #fff;
}
.slope-scroll {
  width: 16px;
  height: 100%;
  flex: none;
  display: flex;
  align-items: flex-end;
  justify-content: center;
  padding-bottom: 4px;
  box-sizing: border-box;
}
.big {
  flex: none;
  background: #000;
}
.win-foot {
  flex: 1;
  display: flex;
  align-items: center;
  justify-content: flex-end;
}
.back-foot {
  flex: 1;
  display: flex;
  align-items: center;
  justify-content: flex-end;
  gap: 15px;
  padding: 6px 26px 0 0;
}
.back-foot .first {
  margin-right: 320px;
}
.btn {
  width: 89px;
  height: 25px;
  padding: 0;
  border: 1px solid #adadad;
  background: #e1e1e1;
  color: #111;
  font: 12px/1 "Noto Sans CJK SC", sans-serif;
}
.btn.primary {
  border: 2px solid #0078d7;
}
.front-title {
  height: 31px;
  justify-content: flex-start;
}
.front-logo {
  width: 16px;
  height: 17px;
  margin: 0 5px 0 7px;
}
.front-title span {
  margin-right: auto;
  font-size: 12px;
}
.front-body {
  height: 422px;
  flex: none;
  display: flex;
  border-bottom: 1px solid #aaa;
}
.shapes {
  flex: none;
  display: grid;
  grid-template-columns: 303px 303px;
  grid-template-rows: 178px 205px 29px;
  gap: 5px 4px;
  padding-left: 4px;
}
.shape {
  background: #000;
  overflow: hidden;
}
.shape svg {
  display: block;
}
.shape.blank {
  background: transparent;
}
.shape.picked {
  border: 3px solid #f00;
}
.front-scroll {
  position: relative;
  width: 17px;
  margin-left: 3px;
  flex: none;
  display: flex;
  flex-direction: column;
  align-items: center;
  background: #f0f0f0;
}
.front-scroll i {
  display: block;
  width: 17px;
  height: 196px;
  margin-top: 114px;
  background: #cdcdcd;
}
.front-scroll .up {
  margin-top: 7px;
}
.front-scroll .dn {
  margin-top: auto;
  margin-bottom: 4px;
}
.front-foot {
  gap: 16px;
  padding-right: 34px;
}

/* the CAD drawings */
.cad text {
  stroke: none;
}
.cad .cn {
  font-family: "Noto Sans CJK SC", sans-serif;
}
.cad .en {
  font-family: "Liberation Mono", monospace;
}
.cad .se {
  font-family: "Liberation Serif", serif;
}
.cad .tw {
  fill: #fff;
}
.cad .ts {
  fill: #b4c4d0;
}
.cad .tg {
  fill: #00e800;
}
.cad path {
  fill: none;
  shape-rendering: crispEdges;
}
.cad .ln {
  stroke: #fff;
  stroke-width: 3;
}
.cad .mg {
  stroke: #f0f;
  stroke-width: 5;
}
.cad .rd {
  stroke: #f00;
  stroke-width: 6;
}
.cad .rd.thin {
  stroke-width: 5;
}
.cad .gl {
  stroke: #0c0;
  stroke-width: 6;
}
.cad .cy {
  stroke: #0ff;
  stroke-width: 6;
}
.cad .ye {
  stroke: #ff0;
  stroke-width: 6;
}
.cad .yd {
  stroke: #ff0;
  stroke-width: 3;
  stroke-dasharray: 3 21;
}
.cy-dot {
  fill: #0ff;
}
.gl-dot {
  fill: #0f0;
}
.ye-dot {
  fill: #ff0;
}

.mark {
  position: absolute;
  box-sizing: border-box;
  border: 7px solid #f00;
}
.m1 {
  left: 282px;
  top: 221px;
  width: 391px;
  height: 267px;
}
.m2 {
  left: 410px;
  top: 501px;
  width: 137px;
  height: 51px;
}
.m3 {
  left: 503px;
  top: 589px;
  width: 147px;
  height: 96px;
}
</style>
